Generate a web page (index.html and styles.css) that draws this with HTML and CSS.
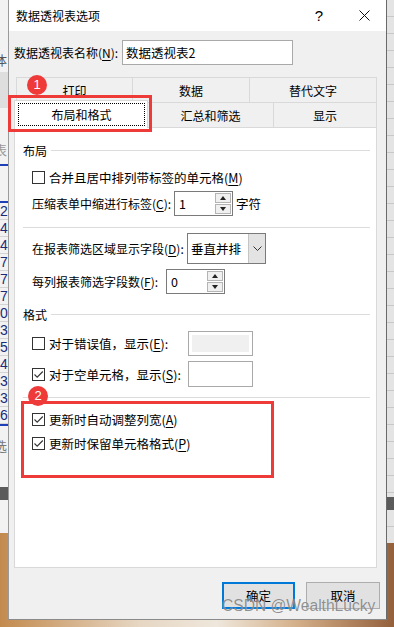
FILE: index.html
```html
<!DOCTYPE html>
<html>
<head>
    <meta charset="utf-8">
    <link rel="stylesheet" href="styles.css">
</head>
<body>
    <div class="sheet-left">
        <div class="frag frag-a">体</div>
        <div class="frag frag-b">表</div>
        <div class="nums">
            <span>2</span><span>4</span><span>4</span><span>7</span><span>7</span><span>7</span><span>0</span>
            <span>3</span><span>5</span><span>4</span><span>3</span><span>3</span><span>6</span>
        </div>
        <div class="frag frag-c">选</div>
    </div>

    <div class="dialog">
        <div class="titlebar">
            <span class="title">数据透视表选项</span>
            <span class="help">?</span>
            <svg class="close" width="11" height="11" viewBox="0 0 11 11">
                <path d="M0.5 0.5 L10.5 10.5 M10.5 0.5 L0.5 10.5" stroke="#111" stroke-width="1" fill="none"/>
            </svg>
        </div>

        <div class="name-row">
            <span class="name-label">数据透视表名称(<u>N</u>):</span>
            <div class="textbox">数据透视表2</div>
        </div>

        <div class="tabs">
            <div class="tab-row back">
                <div class="tab w1">打印</div>
                <div class="tab w2">数据</div>
                <div class="tab w3">替代文字</div>
            </div>
            <div class="tab-row front">
                <div class="tab active"><span class="focus">布局和格式</span></div>
                <div class="tab w5">汇总和筛选</div>
                <div class="tab w6">显示</div>
            </div>

            <div class="panel">
                <div class="group-head"><span>布局</span><i></i></div>
                <div class="row check-row first">
                    <span class="box"></span>
                    <span>合并且居中排列带标签的单元格(<u>M</u>)</span>
                </div>
                <div class="row ctl-row">
                    <span class="lbl lbl-indent">压缩表单中缩进行标签(<u>C</u>):</span>
                    <div class="spin">
                        <span class="val">1</span>
                        <div class="spin-btns"><span class="up"></span><span class="down"></span></div>
                    </div>
                    <span class="unit">字符</span>
                </div>

                <div class="sep sep1"></div>

                <div class="row ctl-row sel-row">
                    <span class="lbl lbl-area">在报表筛选区域显示字段(<u>D</u>):</span>
                    <div class="select">
                        <span class="val">垂直并排</span>
                        <span class="drop">
                            <svg width="9" height="5" viewBox="0 0 9 5"><path d="M0.5 0.5 L4.5 4.5 L8.5 0.5" stroke="#333" fill="none"/></svg>
                        </span>
                    </div>
                </div>
                <div class="row ctl-row spin2-row">
                    <span class="lbl lbl-count">每列报表筛选字段数(<u>F</u>):</span>
                    <div class="spin">
                        <span class="val">0</span>
                        <div class="spin-btns"><span class="up"></span><span class="down"></span></div>
                    </div>
                </div>

                <div class="group-head fmt-head"><span>格式</span><i></i></div>
                <div class="row ctl-row err-row">
                    <span class="box"></span>
                    <span class="lbl lbl-show">对于错误值，显示(<u>E</u>):</span>
                    <div class="field grey"><span></span></div>
                </div>
                <div class="row ctl-row empty-row">
                    <span class="box checked"><svg width="11" height="11" viewBox="0 0 11 11"><path d="M1.5 5.5 L4.2 8.2 L9.8 2.5" stroke="#333" stroke-width="1.1" fill="none"/></svg></span>
                    <span class="lbl lbl-show">对于空单元格，显示(<u>S</u>):</span>
                    <div class="field"></div>
                </div>

                <div class="sep sep2"></div>

                <div class="row check-row upd1">
                    <span class="box checked"><svg width="11" height="11" viewBox="0 0 11 11"><path d="M1.5 5.5 L4.2 8.2 L9.8 2.5" stroke="#333" stroke-width="1.1" fill="none"/></svg></span>
                    <span>更新时自动调整列宽(<u>A</u>)</span>
                </div>
                <div class="row check-row upd2">
                    <span class="box checked"><svg width="11" height="11" viewBox="0 0 11 11"><path d="M1.5 5.5 L4.2 8.2 L9.8 2.5" stroke="#333" stroke-width="1.1" fill="none"/></svg></span>
                    <span>更新时保留单元格格式(<u>P</u>)</span>
                </div>
            </div>
        </div>

        <div class="buttons">
            <div class="btn default">确定</div>
            <div class="btn">取消</div>
        </div>

        <!-- annotations drawn over the dialog -->
        <div class="mark mark1"></div>
        <div class="badge badge1">1</div>
        <div class="mark mark2"></div>
        <div class="badge badge2">2</div>
        <div class="watermark">CSDN @WealthLucky</div>
    </div>

    <div class="sheet-right"></div>
</body>
</html>
```

FILE: styles.css
```css
body {
    margin: 0;
    width: 394px;
    height: 627px;
    overflow: hidden;
    display: flex;
    align-items: flex-start;
    background: linear-gradient(90deg, #c38a4e 0%, #e6d6c2 35%, #efe7dc 55%, #d4b08a 75%, #94603c 100%);
    font-family: "Noto Sans CJK SC", "Microsoft YaHei", sans-serif;
    font-size: 12px;
    color: #000;
}

u {
    text-decoration: underline;
    text-underline-offset: 2px;
}

/* excel sheet behind the dialog */
.sheet-left {
    width: 8px;
    height: 533px;
    overflow: hidden;
    background:
        linear-gradient(180deg, transparent 487px, #5b5b5b 487px, #5b5b5b 500px, transparent 500px),
        linear-gradient(180deg, #f2f2f2 0, #f2f2f2 72px, #dedede 72px, #dedede 108px, #f2f2f2 108px);
    display: flex;
    flex-direction: column;
    color: #555;
}

.frag {
    font-size: 13px;
    line-height: 16px;
    text-indent: -6px;
}

.frag-a {
    margin-top: 52px;
}

.frag-b {
    margin-top: 74px;
    color: #999;
    border-bottom: 2px solid #1c3fb8;
    padding-bottom: 6px;
}

.nums {
    margin-top: 35px;
    display: flex;
    flex-direction: column;
    border-top: 2px solid #1c3fb8;
    border-bottom: 2px solid #1c3fb8;
}

.nums span {
    height: 17px;
    line-height: 17px;
    font-family: "Liberation Sans", sans-serif;
    font-size: 14px;
    color: #1a2b7a;
    text-indent: 0px;
    border-bottom: 1px solid #d4d4d4;
    box-sizing: border-box;
}

.frag-c {
    margin-top: 12px;
    color: #777;
}

.sheet-right {
    width: 7px;
    height: 543px;
    background:
        linear-gradient(180deg, transparent 497px, #5b5b5b 497px, #5b5b5b 510px, transparent 510px),
        repeating-linear-gradient(180deg, #e4e4e4 0, #e4e4e4 16px, #c8c8c8 16px, #c8c8c8 17px);
}

/* dialog */
.dialog {
    position: relative;
    width: 379px;
    height: 620px;
    box-sizing: border-box;
    border-left: 1px solid #9a9a9a;
    border-right: 1px solid #6a6a6a;
    border-bottom: 1px solid #8a8a8a;
    background: #f0f0f0;
    display: flex;
    flex-direction: column;
}

.titlebar {
    height: 31px;
    background: #fff;
    display: flex;
    align-items: center;
    padding-left: 7px;
}

.title {
    flex: 1;
    font-size: 12px;
}

.help {
    font-family: "Liberation Sans", sans-serif;
    font-size: 15px;
    margin-right: 36px;
}

.close {
    margin-right: 16px;
}

.name-row {
    margin-top: 9px;
    height: 25px;
    display: flex;
    align-items: center;
    padding-left: 5px;
}

.name-label {
    width: 108px;
}

.textbox {
    width: 171px;
    height: 25px;
    box-sizing: border-box;
    border: 1px solid #a9a9a9;
    background: #fff;
    padding-left: 3px;
    line-height: 23px;
    font-size: 12.5px;
}

/* tabs */
.tabs {
    margin: 12px 0 0 5px;
    width: 363px;
}

.tab-row {
    display: flex;
    height: 25px;
}

.tab-row.back {
    margin-left: 2px;
}

.tab {
    box-sizing: border-box;
    height: 25px;
    border-top: 1px solid #d9d9d9;
    border-left: 1px solid #d9d9d9;
    display: flex;
    align-items: center;
    justify-content: center;
    padding-top: 1px;
}

.tab:last-child {
    border-right: 1px solid #d9d9d9;
}

.w1 { width: 116px; }
.w2 { width: 117px; }
.w3 { width: 128px; }
.w5 { width: 125px; }
.w6 { width: 104px; }

.tab.active {
    position: relative;
    z-index: 1;
    width: 134px;
    height: 28px;
    margin-top: -2px;
    background: #fff;
    border-right: 1px solid #d9d9d9;
    padding: 2px 2px 1px 3px;
    align-items: stretch;
}

.tab.active + .tab {
    border-left: 0;
}

.focus {
    flex: 1;
    border: 1px dotted #000;
    display: flex;
    align-items: center;
    justify-content: center;
    height: 23px;
    box-sizing: border-box;
}

.panel {
    height: 441px;
    box-sizing: border-box;
    border: 1px solid #d9d9d9;
    background: #fff;
    display: flex;
    flex-direction: column;
}

.group-head {
    margin: 12px 6px 0 8px;
    height: 20px;
    display: flex;
    align-items: center;
    gap: 4px;
}

.group-head i {
    flex: 1;
    height: 1px;
    background: #dcdcdc;
}

.fmt-head {
    margin-top: 10px;
}

.row {
    display: flex;
    align-items: center;
    padding-left: 17px;
}

.check-row {
    height: 20px;
    gap: 4px;
    font-size: 12.5px;
}

.check-row.first { margin-top: 7px; }
.upd1 { margin-top: 11px; }
.upd2 { margin-top: 4px; }

.ctl-row {
    height: 25px;
    margin-top: 4px;
}

.sel-row {
    height: 31px;
    margin-top: 5px;
}

.spin2-row { margin-top: 5px; }
.err-row { margin-top: 7px; }
.empty-row { margin-top: 5px; height: 26px; }

.box {
    width: 13px;
    height: 13px;
    box-sizing: border-box;
    border: 1px solid #333;
    background: #fff;
    display: flex;
    align-items: center;
    justify-content: center;
    flex-shrink: 0;
}

.err-row .box,
.empty-row .box {
    margin-right: 4px;
}

.lbl-indent { width: 142px; }
.lbl-area { width: 155px; }
.lbl-count { width: 134px; }
.lbl-show { width: 139px; font-size: 12.5px; }

.spin {
    width: 59px;
    height: 25px;
    box-sizing: border-box;
    border: 1px solid #7a7a7a;
    background: #fff;
    display: flex;
}

.val {
    flex: 1;
    padding-left: 4px;
    line-height: 23px;
    font-size: 12.5px;
}

.spin-btns {
    width: 16px;
    padding: 1px 1px 1px 0;
    display: flex;
    flex-direction: column;
    gap: 1px;
}

.spin-btns span {
    flex: 1;
    box-sizing: border-box;
    border: 1px solid #b4b4b4;
    background: #f0f0f0;
    display: flex;
    align-items: center;
    justify-content: center;
}

.spin-btns .up::after {
    content: "";
    border-left: 3.5px solid transparent;
    border-right: 3.5px solid transparent;
    border-bottom: 4px solid #222;
}

.spin-btns .down::after {
    content: "";
    border-left: 3.5px solid transparent;
    border-right: 3.5px solid transparent;
    border-top: 4px solid #222;
}

.unit {
    margin-left: 3px;
    font-size: 12.5px;
}

.select {
    width: 79px;
    height: 31px;
    box-sizing: border-box;
    border: 1px solid #7a7a7a;
    background: #fff;
    display: flex;
}

.select .val {
    line-height: 29px;
    padding-left: 3px;
}

.drop {
    width: 16px;
    background: #e3e3e3;
    border-left: 1px solid #c4c4c4;
    display: flex;
    align-items: center;
    justify-content: center;
}

.field {
    width: 65px;
    height: 100%;
    box-sizing: border-box;
    border: 1px solid #a9a9a9;
    background: #fff;
    padding: 3px;
    display: flex;
}

.field.grey span {
    flex: 1;
    background: #f0f0f0;
}

.sep {
    margin: 0 6px 0 8px;
    height: 1px;
    background: #dcdcdc;
}

.sep1 { margin-top: 11px; }
.sep2 { margin-top: 10px; }

/* bottom buttons */
.buttons {
    margin-top: 14px;
    display: flex;
    justify-content: flex-end;
    gap: 11px;
    padding-right: 6px;
}

.btn {
    width: 74px;
    height: 27px;
    box-sizing: border-box;
    border: 1px solid #adadad;
    background: #e1e1e1;
    display: flex;
    align-items: center;
    justify-content: center;
    font-size: 12.5px;
}

.btn.default {
    width: 73px;
    border: 2px solid #0078d7;
}

/* annotation marks */
.mark {
    position: absolute;
    box-sizing: border-box;
    border: 3px solid #ef3a3a;
}

.mark1 {
    left: -1px;
    top: 95px;
    width: 144px;
    height: 37px;
}

.mark2 {
    left: 12px;
    top: 401px;
    width: 253px;
    height: 77px;
}

.badge {
    position: absolute;
    width: 20px;
    height: 20px;
    border-radius: 50%;
    background: #ef3a3a;
    color: #fff;
    font-family: "Liberation Sans", sans-serif;
    font-size: 13px;
    line-height: 20px;
    text-align: center;
}

.badge1 {
    left: 18px;
    top: 75px;
}

.badge2 {
    left: 19px;
    top: 386px;
}

.watermark {
    position: absolute;
    left: 213px;
    top: 597px;
    font-family: "Liberation Sans", sans-serif;
    font-size: 15.6px;
    color: rgba(110, 110, 110, 0.75);
    text-shadow: 0 0 1px rgba(255, 255, 255, 0.6);
    white-space: nowrap;
}
```
